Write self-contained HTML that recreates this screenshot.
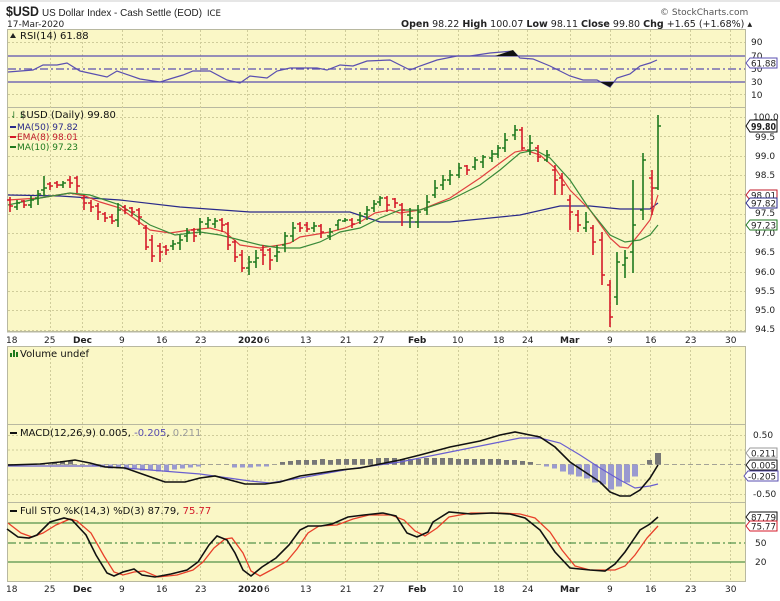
<!DOCTYPE html>
<html><head><meta charset="utf-8"><style>
html,body{margin:0;padding:0;background:#fff}
svg{display:block}
text{font-family:"DejaVu Sans","Liberation Sans",sans-serif;font-size:9px;fill:#222}
.ax{font-size:9px;fill:#333}
.t{font-size:10px;fill:#111}
</style></head><body>
<svg width="780" height="601" viewBox="0 0 780 601" xmlns="http://www.w3.org/2000/svg">
<rect width="780" height="601" fill="#fff"/>
<line x1="0" y1="1" x2="780" y2="1" stroke="#ccc"/>
<!-- header -->
<text x="6" y="16" textLength="33" lengthAdjust="spacingAndGlyphs" style="font-size:14px;font-weight:bold;font-family:'Liberation Sans',sans-serif">$USD</text>
<text x="42" y="16" textLength="160" lengthAdjust="spacingAndGlyphs" style="font-size:10.5px;font-family:'Liberation Sans',sans-serif">US Dollar Index - Cash Settle (EOD)</text>
<text x="207" y="16" textLength="14" lengthAdjust="spacingAndGlyphs" style="font-size:9px">ICE</text>
<text x="7" y="27" style="font-size:9px">17-Mar-2020</text>
<text x="660" y="15" style="font-size:9px;fill:#555">© StockCharts.com</text>
<text x="401" y="27" style="font-size:9.5px"><tspan font-weight="bold">Open</tspan> 98.22 <tspan font-weight="bold">High</tspan> 100.07 <tspan font-weight="bold">Low</tspan> 98.11 <tspan font-weight="bold">Close</tspan> 99.80 <tspan font-weight="bold">Chg</tspan> +1.65 (+1.68%) ▴</text>

<!-- panels -->
<g fill="#FAF7C6" stroke="#b8b8a0" stroke-width="1">
<rect x="7.5" y="29.5" width="738" height="78"/>
<rect x="7.5" y="107.5" width="738" height="224"/>
<rect x="7.5" y="346.5" width="738" height="78"/>
<rect x="7.5" y="424.5" width="738" height="78"/>
<rect x="7.5" y="502.5" width="738" height="79"/>
</g>
<!-- vertical grid -->
<g stroke="#cfcc9a" stroke-dasharray="2,2" stroke-width="1">
<path d="M50.5 30V582M82.5 30V582M122.5 30V582M162.5 30V582M200.5 30V582M247.5 30V582M305.5 30V582M345.5 30V582M378.5 30V582M417.5 30V582M458.5 30V582M498.5 30V582M527.5 30V582M570.5 30V582M610.5 30V582M650.5 30V582M690.5 30V582M730.5 30V582"/>
<path d="M8 117.5H745M8 136.5H745M8 156.5H745M8 175.5H745M8 194.5H745M8 214.5H745M8 233.5H745M8 252.5H745M8 272.5H745M8 291.5H745M8 310.5H745M8 330.5H745"/>
<path d="M8 42.5H745M8 94.5H745M8 435.5H745M8 494.5H745M8 450H745M8 480H745"/>
</g>
<rect x="0" y="332" width="780" height="14" fill="#fff"/>
<line x1="7" y1="332" x2="746" y2="332" stroke="#b8b8a0"/>
<line x1="7" y1="346.5" x2="746" y2="346.5" stroke="#b8b8a0"/>

<!-- RSI -->
<g stroke="#5a4fb0" stroke-width="1.2" fill="none">
<line x1="8" y1="56" x2="745" y2="56"/>
<line x1="8" y1="82" x2="745" y2="82"/>
<line x1="8" y1="69" x2="745" y2="69" stroke-dasharray="8,3,2,3"/>
<polyline points="8,72 33,70 43,65 57,65 67,63 80,71 107,77 117,71 140,79 160,82 173,78 183,75 193,71 210,71 227,80 240,83 250,76 267,78 277,71 290,68 317,68 327,70 340,65 353,66 367,61 390,60 410,70 420,66 437,60 457,56 470,56 490,53 513,51 520,58 533,59 550,66 570,76 583,80 597,80 610,87 617,78 630,74 640,66 650,63 657,60"/>
</g>
<path d="M495 56 L513 50 L518 56Z M600 82 L610 87 L614 82Z" fill="#111"/>
<path d="M10 38 l3 -5 l3 5z" fill="#222"/>
<text x="20" y="39" class="t" style="font-size:10px">RSI(14) 61.88</text>
<g class="ax"><text x="751" y="45">90</text><text x="751" y="59">70</text><text x="751" y="72">50</text><text x="751" y="85">30</text><text x="751" y="98">10</text></g>
<path d="M746 63 l4 -5 h27 v10 h-27z" fill="#fff" stroke="#5a4fb0"/><text x="751" y="66.5" textLength="25" lengthAdjust="spacingAndGlyphs">61.88</text>

<!-- price MAs -->
<g fill="none" stroke-width="1.2">
<polyline stroke="#2a2a8a" points="8,195 60,196 120,200 180,207 250,212 350,212 380,222 450,222 520,215 560,206 590,206 620,209 650,209 658,203"/>
<polyline stroke="#e04040" points="8,200 40,198 70,193 85,196 100,202 120,208 150,230 170,233 190,230 210,228 225,232 240,245 260,248 280,245 290,243 300,237 330,232 345,228 360,222 375,213 390,210 400,213 420,210 450,198 480,178 500,163 515,152 525,150 540,155 555,168 570,190 590,210 610,238 620,247 628,248 640,233 650,220 658,195"/>
<polyline stroke="#3a8a3a" points="8,205 40,198 70,193 90,195 120,205 150,225 175,235 200,232 220,235 240,240 260,245 280,248 300,248 320,242 340,232 360,228 380,218 400,210 420,210 450,200 480,185 500,170 520,153 535,150 550,158 570,180 590,210 610,235 625,242 640,240 650,235 658,225"/>
</g>
<!-- bars -->
<path fill="none" stroke="#d41a2a" stroke-width="1.6" d="
M10 197V212M7 200H10M10 206H13
M24 200V208M21 201H24M24 205H27
M50 182V190M47 184H50M50 186H53
M57 181V188M54 183H57M57 185H60
M70 176V188M67 180H70M70 183H73
M77 176V193M74 178H77M77 186H80
M84 195V210M81 198H84M84 203H87
M91 200V212M88 203H91M91 207H94
M98 203V220M95 206H98M98 212H101
M105 212V222M102 214H105M105 218H108
M112 214V224M109 217H112M112 221H115
M125 205V214M122 207H125M125 210H128
M132 207V216M129 208H132M132 212H135
M139 208V225M136 210H139M139 217H142
M146 225V250M143 228H146M146 247H149
M152 235V262M149 240H152M152 256H155
M160 243V262M157 246H160M160 252H163
M166 245V255M163 247H166M166 250H169
M194 228V242M191 230H194M194 236H197
M222 218V232M219 220H222M222 225H225
M228 222V250M225 224H228M228 245H231
M235 240V262M232 242H235M235 257H238
M242 250V272M239 255H242M242 268H245
M263 245V265M260 250H263M263 255H266
M270 248V270M267 250H270M270 260H273
M300 222V232M297 224H300M300 228H303
M307 222V232M304 225H307M307 229H310
M321 224V238M318 226H321M321 232H324
M352 218V228M349 220H352M352 224H355
M387 196V212M384 198H387M387 205H390
M395 198V208M392 199H395M395 203H398
M402 203V226M399 205H402M402 210H405
M467 165V175M464 166H467M467 170H470
M522 127V150M519 130H522M522 148H525
M538 145V162M535 148H538M538 157H541
M555 165V195M552 170H555M555 180H558
M562 173V195M559 178H562M562 185H565
M570 195V230M567 200H570M570 212H573
M578 210V232M575 215H578M578 225H581
M593 225V255M590 228H593M593 242H596
M602 232V285M599 240H602M602 275H605
M610 280V327M607 285H610M610 317H613
M652 170V215M649 178H652M652 188H655"/>
<path fill="none" stroke="#1f7a1f" stroke-width="1.6" d="
M17 200V210M14 207H17M17 203H20
M31 196V208M28 205H31M31 200H34
M38 190V205M35 198H38M38 194H41
M44 176V196M41 190H44M44 188H47
M63 181V188M60 185H63M63 183H66
M118 203V227M115 220H118M118 210H121
M173 240V250M170 246H173M173 244H176
M180 235V250M177 243H180M180 240H183
M187 228V242M184 236H187M187 232H190
M200 218V235M197 230H200M200 222H203
M208 217V228M205 224H208M208 220H211
M215 218V228M212 224H215M215 221H218
M249 256V275M246 268H249M249 262H252
M256 250V268M253 262H256M256 258H259
M277 245V262M274 256H277M277 252H280
M285 232V252M282 245H285M285 236H288
M293 222V242M290 236H293M293 228H296
M314 222V232M311 228H314M314 226H317
M330 228V240M327 236H330M330 232H333
M338 220V230M335 225H338M338 220H341
M345 218V222M342 221H345M345 220H348
M360 212V224M357 220H360M360 216H363
M367 206V220M364 214H367M367 210H370
M374 200V212M371 208H374M374 204H377
M380 196V206M377 202H380M380 198H383
M410 208V228M407 215H410M410 218H413
M418 205V228M415 222H418M418 212H421
M427 195V215M424 210H427M427 202H430
M435 180V198M432 195H435M435 188H438
M443 175V190M440 185H443M443 180H446
M450 170V185M447 180H450M450 175H453
M459 163V178M456 175H459M459 168H462
M475 157V170M472 167H475M475 160H478
M483 155V168M480 162H483M483 157H486
M492 150V162M489 158H492M492 154H495
M498 145V158M495 154H498M498 148H501
M505 133V152M502 148H505M505 140H508
M515 125V140M512 135H515M515 130H518
M530 135V155M527 150H530M530 143H533
M547 150V162M544 160H547M547 155H550
M586 212V232M583 228H586M586 222H589
M617 252V305M614 297H617M617 262H620
M625 250V278M622 265H625M625 258H628
M633 180V273M630 252H633M633 225H636
M643 153V220M640 210H643M643 160H646
M658 115V190M655 188H658M658 126H661"/>
<text x="10" y="118" style="font-size:9px;fill:#2a7a2a">⇃⇂</text>
<text x="20" y="118" class="t">$USD (Daily) 99.80</text>
<rect x="10" y="126" width="6" height="2" fill="#2a2a8a"/><text x="17" y="130" style="fill:#2a2a8a">MA(50) 97.82</text>
<rect x="10" y="136" width="6" height="2" fill="#d41a2a"/><text x="17" y="140" style="fill:#c01a2a">EMA(8) 98.01</text>
<rect x="10" y="146" width="6" height="2" fill="#1f7a1f"/><text x="17" y="150" style="fill:#1f7a1f">MA(10) 97.23</text>
<g class="ax">
<text x="753" y="120">100.0</text><text x="755" y="140">99.5</text><text x="755" y="159">99.0</text><text x="755" y="178">98.5</text><text x="755" y="197">98.0</text><text x="755" y="216">97.5</text><text x="755" y="236">97.0</text><text x="755" y="255">96.5</text><text x="755" y="275">96.0</text><text x="755" y="294">95.5</text><text x="755" y="313">95.0</text><text x="755" y="332">94.5</text>
</g>
<path d="M746 126 l4 -6 h27 v12 h-27z" fill="#fff" stroke="#111"/><text x="751" y="130" textLength="25" lengthAdjust="spacingAndGlyphs" style="font-size:10px;font-weight:bold">99.80</text>
<path d="M746 195 l4 -5 h27 v10 h-27z" fill="#fff" stroke="#c01a2a"/><text x="751" y="198.5" textLength="25" lengthAdjust="spacingAndGlyphs">98.01</text>
<path d="M746 203 l4 -5 h27 v10 h-27z" fill="#fff" stroke="#2a2a8a"/><text x="751" y="206.5" textLength="25" lengthAdjust="spacingAndGlyphs">97.82</text>
<path d="M746 225 l4 -5 h27 v10 h-27z" fill="#fff" stroke="#1f7a1f"/><text x="751" y="228.5" textLength="25" lengthAdjust="spacingAndGlyphs">97.23</text>

<!-- date axis 1 -->
<g class="ax">
<text x="6" y="343">18</text><text x="44" y="343">25</text><text x="73" y="343" font-weight="bold">Dec</text><text x="119" y="343">9</text><text x="156" y="343">16</text><text x="195" y="343">23</text><text x="238" y="343" font-weight="bold">2020</text><text x="264" y="343">6</text><text x="300" y="343">13</text><text x="340" y="343">21</text><text x="373" y="343">27</text><text x="408" y="343" font-weight="bold">Feb</text><text x="452" y="343">10</text><text x="493" y="343">18</text><text x="522" y="343">24</text><text x="560" y="343" font-weight="bold">Mar</text><text x="607" y="343">9</text><text x="645" y="343">16</text><text x="685" y="343">23</text><text x="725" y="343">30</text>
</g>

<!-- Volume -->
<path d="M10 357h2v-4h-2zM13 357h2v-7h-2zM16 357h2v-5h-2z" fill="#1f7a1f"/>
<text x="20" y="357" class="t">Volume undef</text>

<!-- MACD -->
<rect x="10" y="432" width="7" height="2" fill="#111"/>
<text x="20" y="436" class="t">MACD(12,26,9) 0.005, <tspan fill="#5a4fb0">-0.205</tspan>, <tspan fill="#999">0.211</tspan></text>
<line x1="8" y1="464.5" x2="745" y2="464.5" stroke="#888" stroke-dasharray="5,3" stroke-width="0.8"/>
<g fill="#777">
<rect x="52" y="462" width="5" height="2.5"/><rect x="60" y="461" width="5" height="3.5"/><rect x="68" y="461" width="5" height="3.5"/><rect x="280" y="462" width="5" height="2.5"/><rect x="288" y="461" width="5" height="3.5"/><rect x="296" y="460" width="5" height="4.5"/><rect x="304" y="460" width="5" height="4.5"/><rect x="312" y="460" width="5" height="4.5"/><rect x="320" y="459" width="5" height="5.5"/><rect x="328" y="460" width="5" height="4.5"/><rect x="336" y="459" width="5" height="5.5"/><rect x="344" y="459" width="5" height="5.5"/><rect x="352" y="459" width="5" height="5.5"/><rect x="360" y="459" width="5" height="5.5"/><rect x="368" y="459" width="5" height="5.5"/><rect x="376" y="458" width="5" height="6.5"/><rect x="384" y="458" width="5" height="6.5"/><rect x="392" y="458" width="5" height="6.5"/><rect x="400" y="459" width="5" height="5.5"/><rect x="408" y="459" width="5" height="5.5"/><rect x="416" y="459" width="5" height="5.5"/><rect x="424" y="458" width="5" height="6.5"/><rect x="432" y="458" width="5" height="6.5"/><rect x="440" y="458" width="5" height="6.5"/><rect x="448" y="458" width="5" height="6.5"/><rect x="456" y="459" width="5" height="5.5"/><rect x="464" y="459" width="5" height="5.5"/><rect x="472" y="459" width="5" height="5.5"/><rect x="480" y="459" width="5" height="5.5"/><rect x="488" y="459" width="5" height="5.5"/><rect x="496" y="459" width="5" height="5.5"/><rect x="504" y="460" width="5" height="4.5"/><rect x="512" y="460" width="5" height="4.5"/><rect x="520" y="461" width="5" height="3.5"/><rect x="528" y="462" width="5" height="2.5"/><rect x="647" y="460" width="5" height="4.5"/><rect x="655" y="453" width="6" height="11.5"/>
</g>
<g fill="#9a9ad0">
<rect x="92" y="464.5" width="5" height="2"/><rect x="100" y="464.5" width="5" height="3"/><rect x="108" y="464.5" width="5" height="4"/><rect x="116" y="464.5" width="5" height="4"/><rect x="124" y="464.5" width="5" height="5"/><rect x="132" y="464.5" width="5" height="5"/><rect x="140" y="464.5" width="5" height="6"/><rect x="148" y="464.5" width="5" height="6"/><rect x="156" y="464.5" width="5" height="7"/><rect x="164" y="464.5" width="5" height="7"/><rect x="172" y="464.5" width="5" height="5"/><rect x="180" y="464.5" width="5" height="4"/><rect x="188" y="464.5" width="5" height="3"/><rect x="196" y="464.5" width="5" height="2"/><rect x="232" y="464.5" width="5" height="3"/><rect x="240" y="464.5" width="5" height="3"/><rect x="248" y="464.5" width="5" height="3"/><rect x="256" y="464.5" width="5" height="2"/><rect x="264" y="464.5" width="5" height="2"/>
<rect x="544" y="464.5" width="5" height="2"/><rect x="552" y="464.5" width="5" height="4"/><rect x="560" y="464.5" width="6" height="7"/><rect x="568" y="464.5" width="6" height="10"/><rect x="576" y="464.5" width="6" height="12"/><rect x="584" y="464.5" width="6" height="14"/><rect x="592" y="464.5" width="6" height="18"/><rect x="600" y="464.5" width="6" height="20"/><rect x="608" y="464.5" width="6" height="25"/><rect x="616" y="464.5" width="6" height="22"/><rect x="624" y="464.5" width="6" height="18"/><rect x="632" y="464.5" width="6" height="12"/>
</g>
<polyline fill="none" stroke="#6a5fd0" stroke-width="1.2" points="8,466 100,466 150,470 200,474 250,481 270,483 300,478 350,469 400,462 450,452 500,442 520,438 540,438 560,443 580,455 600,468 620,480 635,488 650,486 658,484"/>
<polyline fill="none" stroke="#111" stroke-width="1.6" points="8,465 40,464 60,462 75,460 90,463 105,467 125,468 145,475 165,482 185,482 200,478 215,476 230,480 245,484 265,484 280,482 300,476 320,473 340,470 360,468 380,464 400,460 420,455 450,447 480,441 500,435 515,432 530,435 540,437 555,447 570,462 585,472 600,482 610,492 620,496 630,496 640,490 650,478 658,465"/>
<g class="ax"><text x="753" y="438">0.50</text><text x="753" y="497">-0.50</text></g>
<path d="M746 453 l4 -5 h27 v10 h-27z" fill="#fff" stroke="#999"/><text x="751" y="456.5" textLength="25" lengthAdjust="spacingAndGlyphs">0.211</text>
<path d="M746 465 l4 -5 h27 v10 h-27z" fill="#fff" stroke="#111"/><text x="751" y="468.5" textLength="25" lengthAdjust="spacingAndGlyphs">0.005</text>
<path d="M744 476 l4 -5 h30 v10 h-30z" fill="#fff" stroke="#5a4fb0"/><text x="748" y="479.5" textLength="28" lengthAdjust="spacingAndGlyphs">-0.205</text>

<!-- STO -->
<rect x="10" y="510" width="7" height="2" fill="#111"/>
<text x="20" y="514" class="t">Full STO %K(14,3) %D(3) 87.79, <tspan fill="#d41a2a">75.77</tspan></text>
<g stroke="#2a7a2a" stroke-width="1.1">
<line x1="8" y1="523" x2="745" y2="523"/><line x1="8" y1="562" x2="745" y2="562"/>
<line x1="8" y1="543" x2="745" y2="543" stroke-dasharray="8,3,2,3"/>
</g>
<polyline fill="none" stroke="#e8402a" stroke-width="1.3" points="8,523 21,533 32,537 43,533 56,525 70,519 77,521 91,533 104,556 114,572 123,575 134,572 144,571 158,577 177,575 193,570 203,562 214,548 225,539 232,538 243,553 251,571 260,576 273,569 287,561 297,549 308,533 319,526 337,525 353,519 369,515 391,515 404,520 415,531 425,536 437,528 449,517 471,513 500,513 520,514 535,518 550,532 562,550 575,566 590,570 605,570 615,570 625,566 635,555 647,538 658,526"/>
<polyline fill="none" stroke="#111" stroke-width="1.6" points="7,529 18,537 29,538 37,535 50,522 64,518 72,520 86,535 96,555 107,573 114,576 123,572 134,569 142,575 155,577 171,574 187,570 198,562 209,545 217,536 227,540 235,553 243,570 251,576 262,567 276,558 289,545 300,530 308,526 321,526 332,524 348,517 364,515 383,513 396,516 407,533 417,537 428,532 433,522 449,512 471,514 492,513 510,514 525,518 540,530 555,552 570,568 590,570 605,571 615,564 625,552 640,530 650,524 658,517"/>
<g class="ax"><text x="755" y="546">50</text><text x="755" y="565">20</text></g>
<path d="M746 517 l4 -5 h27 v10 h-27z" fill="#fff" stroke="#111"/><text x="751" y="520.5" textLength="25" lengthAdjust="spacingAndGlyphs">87.79</text>
<path d="M746 526 l4 -5 h27 v10 h-27z" fill="#fff" stroke="#d41a2a"/><text x="751" y="529.5" textLength="25" lengthAdjust="spacingAndGlyphs">75.77</text>

<!-- date axis 2 -->
<g class="ax">
<text x="6" y="592">18</text><text x="44" y="592">25</text><text x="73" y="592" font-weight="bold">Dec</text><text x="119" y="592">9</text><text x="156" y="592">16</text><text x="195" y="592">23</text><text x="238" y="592" font-weight="bold">2020</text><text x="264" y="592">6</text><text x="300" y="592">13</text><text x="340" y="592">21</text><text x="373" y="592">27</text><text x="408" y="592" font-weight="bold">Feb</text><text x="452" y="592">10</text><text x="493" y="592">18</text><text x="522" y="592">24</text><text x="560" y="592" font-weight="bold">Mar</text><text x="607" y="592">9</text><text x="645" y="592">16</text><text x="685" y="592">23</text><text x="725" y="592">30</text>
</g>
</svg>
</body></html>
